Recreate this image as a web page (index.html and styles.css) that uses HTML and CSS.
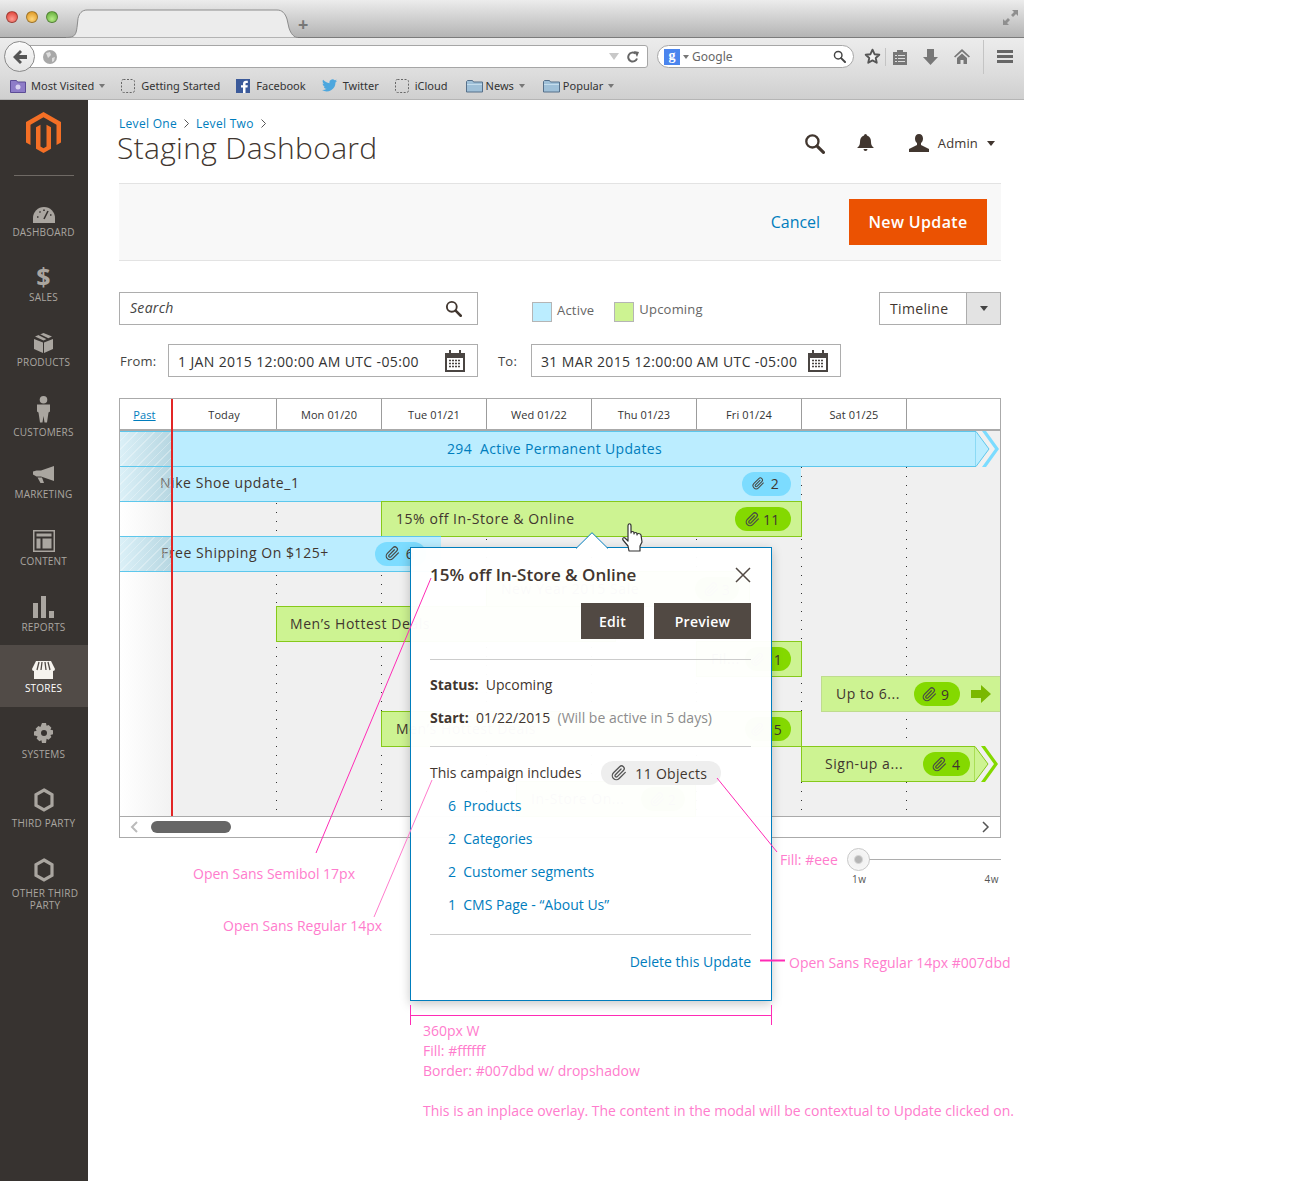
FILE: index.html
```html
<!DOCTYPE html>
<html lang="en">

<head>
    <meta charset="UTF-8">
    <title>Staging Dashboard</title>
    <link rel="stylesheet" href="styles.css">
</head>

<body>
<svg class="sprite" width="0" height="0">
  <symbol id="clip" viewBox="0 0 24 24"><path fill="none" stroke="currentColor" stroke-width="2" stroke-linecap="round" stroke-linejoin="round" d="M21.44 11.05l-9.19 9.19a6 6 0 0 1-8.49-8.49l9.19-9.19a4 4 0 0 1 5.66 5.66l-9.2 9.19a2 2 0 0 1-2.83-2.83l8.49-8.48"/></symbol>
  <symbol id="glass" viewBox="0 0 20 20"><circle cx="8" cy="8" r="5.8" fill="none" stroke="currentColor" stroke-width="2.2"/><path d="M12.5 12.5L18.5 18.5" stroke="currentColor" stroke-width="3" stroke-linecap="round"/></symbol>
  <symbol id="cal" viewBox="0 0 22 22"><path fill="#4a4542" d="M1 3h20v19H1z"/><path fill="#fff" d="M3 8h16v12H3z"/><path fill="#4a4542" d="M5 0h2v5H5zM15 0h2v5h-2z"/><path stroke="#4a4542" stroke-width="1.4" stroke-dasharray="2 1" d="M5 10.500h12M5 13.500h12M5 16.500h12"/></symbol>
  <symbol id="hex" viewBox="0 0 20 24"><path fill="none" stroke="currentColor" stroke-width="3.2" d="M10 2l8 4.700v10.600L10 22l-8-4.700V6.700z"/></symbol>
  <symbol id="dashed" viewBox="0 0 14 14"><rect x=".5" y=".5" width="13" height="13" rx="2" fill="none" stroke="#666" stroke-dasharray="2 1.500"/></symbol>
  <symbol id="folder" viewBox="0 0 17 14"><path fill="#9fc0d8" stroke="#56708a" d="M.5 2.500V13h16V3h-9l-1-1.500H1.500z"/><path fill="#c4dcec" d="M1 5h15v1H1z"/></symbol>
  <symbol id="crumb" viewBox="0 0 5 9"><path fill="none" stroke="#555" d="M.5.5l4 4-4 4"/></symbol>
</svg>

<div class="page">

  <div class="browser">
    <div class="tabbar">
      <div class="lights"><i class="light red"></i><i class="light amber"></i><i class="light lime"></i></div>
      <svg class="tab-shape" width="242" height="29" viewBox="0 0 242 29"><path fill="#ececec" stroke="#8c8c8c" d="M0 28.500c9 0 10-3 11-10l1-9c1-5 4-8.500 9-8.500h190c5 0 8 3 10 9l2 9c2 6 5 9.500 9 9.500"/></svg>
      <span class="tab-plus">+</span>
      <svg class="expand" width="15" height="15" viewBox="0 0 15 15"><path fill="#8f8f8f" d="M9 0h6v6l-2-2-3 3-2-2 3-3zM6 15H0V9l2 2 3-3 2 2-3 3z"/></svg>
    </div>
    <div class="navbar">
      <div class="back">
        <svg width="16" height="16" viewBox="0 0 16 16"><path fill="#555" d="M8 1l2 2-3 3h8v4H7l3 3-2 2-7-7z"/></svg>
      </div>
      <div class="urlbar">
        <svg class="globe" width="14" height="14" viewBox="0 0 14 14"><circle cx="7" cy="7" r="7" fill="#a8a8a8"/><path fill="#ddd" d="M3 3l4-1 1 3-3 3zM9 8l3-1-1 4-2 1z"/></svg>
        <span class="url-tri"></span>
        <svg width="12" height="12" viewBox="0 0 12 12"><path fill="none" stroke="#666" stroke-width="2" d="M10 7.500A4.500 4.500 0 1 1 8.500 2.500"/><path fill="#666" d="M7 0l5 1-2 5z"/></svg>
      </div>
      <div class="searchbar">
        <span class="g-badge">g</span><span class="g-caret"></span>
        <span class="g-text">Google</span>
        <svg class="g-glass" width="13" height="13"><use href="#glass"/></svg>
      </div>
      <div class="tool-icons">
        <svg width="17" height="17" viewBox="0 0 20 20"><path fill="#f2f2f2" stroke="#555" stroke-width="2.2" stroke-linejoin="round" d="M10 2l2.400 5.300 5.600.6-4.200 3.800 1.200 5.700L10 14.500 5 17.400l1.200-5.700L2 7.900l5.600-.6z"/></svg>
        <i class="tool-sep"></i>
        <svg width="14" height="16" viewBox="0 0 14 16"><path fill="#777" d="M0 3h4V1h6v2h4v13H0z"/><path fill="#ddd" d="M2 6h2v1H2zM5 6h7v1H5zM2 9h2v1H2zM5 9h7v1H5zM2 12h2v1H2zM5 12h7v1H5z"/></svg>
        <svg width="15" height="16" viewBox="0 0 15 16"><path fill="#777" d="M4 0h7v8h4l-7.500 8L0 8h4z"/></svg>
        <svg width="16" height="15" viewBox="0 0 16 15"><path fill="#777" d="M8 0l8 7.500-1.200 1L8 2.500 1.200 8.500 0 7.500zM3 9l5-4.500L13 9v6H9.500v-4h-3v4H3z"/></svg>
        <i class="tool-sep tall"></i>
        <svg width="16" height="13" viewBox="0 0 16 13"><path fill="#666" d="M0 0h16v3H0zM0 5h16v3H0zM0 10h16v3H0z"/></svg>
      </div>
    </div>
    <div class="bookmarks">
      <span class="mark mark-most">
        <svg width="16" height="14" viewBox="0 0 16 14"><path fill="#8e7cc8" stroke="#5c4c96" d="M.5 1.500h6l1 1.500h8v10.500H.500z"/><circle cx="8" cy="8" r="2.500" fill="#d8d0f0"/></svg>
        Most Visited<i class="mark-caret"></i>
      </span>
      <span class="mark"><svg width="14" height="14"><use href="#dashed"/></svg>Getting Started</span>
      <span class="mark"><svg width="14" height="14" viewBox="0 0 14 14"><path fill="#3b5a9a" d="M0 0h14v14H0z"/><path fill="#fff" d="M9.500 14V8.500h2l.3-2.300H9.500V5c0-.7.2-1.100 1.100-1.100h1.200V1.800C11.500 1.800 10.900 1.700 10 1.700c-1.800 0-3 1.100-3 3.100v1.400H5v2.300h2V14z"/></svg>Facebook</span>
      <span class="mark"><svg width="15" height="13" viewBox="0 0 24 20"><path fill="#4da7de" d="M24 2.400c-.9.400-1.800.7-2.800.8 1-.6 1.800-1.600 2.200-2.700-1 .6-2 1-3.100 1.200A4.900 4.900 0 0 0 12 6.200C8 6 4.400 4.100 1.700.9c-1.300 2.200-.7 5.100 1.500 6.600-.8 0-1.600-.2-2.200-.6 0 2.300 1.600 4.400 3.900 4.900-.7.200-1.500.2-2.200.1.600 2 2.400 3.400 4.600 3.400A9.900 9.900 0 0 1 0 17.300 14 14 0 0 0 21.500 5c1-.7 1.800-1.600 2.500-2.600z"/></svg>Twitter</span>
      <span class="mark"><svg width="14" height="14"><use href="#dashed"/></svg>iCloud</span>
      <span class="mark mark-tight"><svg width="17" height="14"><use href="#folder"/></svg>News<i class="mark-caret"></i></span>
      <span class="mark mark-tight"><svg width="17" height="14"><use href="#folder"/></svg>Popular<i class="mark-caret"></i></span>
    </div>
  </div>

  <div class="app">
    <nav class="sidebar">
      <svg class="logo" width="35" height="41" viewBox="0 0 35 41"><path fill="#f46f25" d="M17.500 0L35 10v20.500L30.500 33V12.700L17.500 5.200 4.500 12.700V33L0 30.500V10zM17.500 41L10 36.700V15.300l4.500-2.600v21.800l3 1.700 3-1.700V12.700l4.500 2.600v21.400z"/></svg>
      <div class="side-rule"></div>

      <a class="nav-item h-dashboard">
        <svg width="22" height="16" viewBox="0 0 22 16"><path fill="currentColor" d="M11 0a11 11 0 0 1 11 11v5H0v-5A11 11 0 0 1 11 0z"/><path stroke="#373330" stroke-width="1.600" d="M11 12L15 4M4 10h1.500M6.500 4.500l1 1M11 2.500v1.500M17 8h1.500"/></svg>
        <span>Dashboard</span>
      </a>
      <a class="nav-item h-sales">
        <span class="dollar">$</span>
        <span>Sales</span>
      </a>
      <a class="nav-item h-products">
        <svg width="19" height="20" viewBox="0 0 19 20"><path fill="currentColor" d="M0 6l9 3.500V20L0 16zM19 6l-9 3.500V20l9-4zM9.500 0L18 3.500l-8.500 4L1 3.500z"/><path stroke="#373330" stroke-width="1.400" d="M5 1.500l9 4.500"/></svg>
        <span>Products</span>
      </a>
      <a class="nav-item h-customers">
        <svg width="13" height="27" viewBox="0 0 13 27"><circle cx="6.500" cy="3.800" r="3.800" fill="currentColor"/><path fill="currentColor" d="M0 8.500h13v7l-1.500 1-1.500 10H7.500L6.500 20l-1 6.500H3L1.500 16.500 0 15.500z"/></svg>
        <span>Customers</span>
      </a>
      <a class="nav-item h-marketing">
        <svg width="21" height="17" viewBox="0 0 21 17"><path fill="currentColor" d="M21 0v15L8 10.500H3.500L0 8.500v-3l3.500-1H8zM4.500 11.500H9L11 17H7.500z"/></svg>
        <span>Marketing</span>
      </a>
      <a class="nav-item h-content">
        <svg width="22" height="22" viewBox="0 0 22 22"><path fill="none" stroke="currentColor" stroke-width="1.500" d="M.75.750h20.500v20.500H.75z"/><path fill="currentColor" d="M3.500 3.500h15v3h-15zM3.500 8.500h4v10h-4zM9.500 8.500h9v10h-9z"/></svg>
        <span>Content</span>
      </a>
      <a class="nav-item h-reports">
        <svg width="21" height="22" viewBox="0 0 21 22"><path fill="currentColor" d="M0 7h5v15H0zM8 0h5v22H8zM16 15h5v7h-5z"/></svg>
        <span>Reports</span>
      </a>
      <a class="nav-item h-stores active">
        <svg width="23" height="18" viewBox="0 0 23 18"><path fill="#f6f3ee" d="M4 0h15l4 8a2 2 0 0 1-2 2v8H2v-8a2 2 0 0 1-2-2z"/><path stroke="#514b47" stroke-width="1.300" d="M7 1L5 9M10 1L9 9M13 1L14 9M16 1L18 9"/></svg>
        <span>Stores</span>
      </a>
      <a class="nav-item h-systems">
        <svg width="20" height="20" viewBox="0 0 20 20"><path fill="currentColor" d="M8 0h4l.6 2.800 2-.9 2.800 2.800-1 2 2.600.6v4l-2.600.6 1 2-2.800 2.800-2-1L12 20H8l-.6-2.700-2 1-2.800-2.800 1-2L1 12.500l-1-.1v-4l2.600-.6-1-2 2.800-2.800 2 .9z"/><circle cx="10" cy="10" r="3" fill="#373330"/></svg>
        <span>Systems</span>
      </a>
      <a class="nav-item h-third">
        <svg width="20" height="24"><use href="#hex"/></svg>
        <span>Third Party</span>
      </a>
      <a class="nav-item h-other">
        <svg width="20" height="24"><use href="#hex"/></svg>
        <span>Other Third<br>Party</span>
      </a>
    </nav>

    <main class="main">
      <header class="page-head">
        <div>
          <div class="crumbs"><a>Level One</a><svg width="5" height="9"><use href="#crumb"/></svg><a>Level Two</a><svg width="5" height="9"><use href="#crumb"/></svg></div>
          <h1>Staging Dashboard</h1>
        </div>
        <div class="head-tools">
          <svg class="head-glass" width="21" height="21"><use href="#glass"/></svg>
          <svg class="head-bell" width="17" height="18" viewBox="0 0 17 18"><path fill="#41362f" d="M8.500 0a1.500 1.500 0 0 1 1.500 1.500C13 2.500 14 5 14 8c0 3 1 4.500 3 6H0c2-1.500 3-3 3-6 0-3 1-5.500 4-6.500A1.500 1.500 0 0 1 8.500 0zM6.500 15h4a2 2 0 0 1-4 0z"/></svg>
          <svg class="head-user" width="20" height="18" viewBox="0 0 20 18"><path fill="#41362f" d="M10 0c2.500 0 4 1.800 4 4.500 0 2-.8 3.500-2 4.500v2l8 4v3H0v-3l8-4V9C6.800 8 6 6.500 6 4.500 6 1.800 7.500 0 10 0z"/></svg>
          <span class="head-admin">Admin</span>
          <i class="head-caret"></i>
        </div>
      </header>

      <div class="action-bar">
        <a class="cancel">Cancel</a>
        <button class="btn-new">New Update</button>
      </div>

      <div class="filters">
        <div class="field search-field">
          <em>Search</em>
          <svg width="17" height="17"><use href="#glass"/></svg>
        </div>
        <div class="legend">
          <i class="swatch swatch-blue"></i><span class="legend-text">Active</span>
          <i class="swatch swatch-green"></i><span class="legend-last">Upcoming</span>
        </div>
        <div class="view-select">
          <span class="view-name">Timeline</span>
          <span class="view-arrow"><i></i></span>
        </div>
      </div>

      <div class="dates">
        <label class="label-from">From:</label>
        <div class="field date-field"><span>1 JAN 2015 12:00:00 AM UTC -05:00</span><svg width="22" height="22"><use href="#cal"/></svg></div>
        <label class="label-to">To:</label>
        <div class="field date-field"><span>31 MAR 2015 12:00:00 AM UTC -05:00</span><svg width="22" height="22"><use href="#cal"/></svg></div>
      </div>

      <section class="gantt">
        <div class="gantt-head">
          <div class="col-past"><a>Past</a></div>
          <div class="col-today">Today</div>
          <div class="col-day">Mon 01/20</div>
          <div class="col-day">Tue 01/21</div>
          <div class="col-day">Wed 01/22</div>
          <div class="col-day">Thu 01/23</div>
          <div class="col-day">Fri 01/24</div>
          <div class="col-day">Sat 01/25</div>
        </div>
        <div class="gantt-body">
          <div class="past-fade"></div>
          <i class="dots d1"></i><i class="dots d2"></i><i class="dots d3"></i><i class="dots d4"></i><i class="dots d5"></i><i class="dots d6"></i><i class="dots d7"></i>

          <div class="bar blue past b-perm">
            <span class="perm-text">294&nbsp; Active Permanent Updates</span>
            <svg class="tip" width="26" height="36" viewBox="0 0 26 36"><path fill="#bbedff" stroke="#5dc7ec" d="M0 .5h1L14 18 1 35.500H0z"/><path fill="#7cdcff" d="M7 0h4l13 18-13 18H7l13-18z"/></svg>
          </div>
          <div class="bar blue past b-nike">
            <span>Nike Shoe update_1</span>
            <span class="pill pill-blue"><svg width="15" height="15"><use href="#clip"/></svg>2</span>
          </div>
          <div class="bar green b-offer">
            <span>15% off In-Store &amp; Online</span>
            <span class="pill pill-green"><svg width="15" height="15"><use href="#clip"/></svg>11</span>
          </div>
          <div class="bar blue past b-free">
            <span>Free Shipping On $125+</span>
            <span class="pill pill-blue"><svg width="15" height="15"><use href="#clip"/></svg>6</span>
          </div>
          <div class="bar green b-year">
            <span>New Year 2015 Sale</span>
            <span class="pill pill-green"><svg width="15" height="15"><use href="#clip"/></svg>3</span>
          </div>
          <div class="bar green b-mens">
            <span>Men&rsquo;s Hottest Deals</span>
          </div>
          <div class="bar green b-fill">
            <span>Fil...</span>
            <span class="pill pill-green"><svg width="15" height="15"><use href="#clip"/></svg>1</span>
          </div>
          <div class="bar green b-up">
            <span>Up to 6...</span>
            <span class="pill pill-green"><svg width="15" height="15"><use href="#clip"/></svg>9</span>
            <svg class="go" width="20" height="18" viewBox="0 0 20 18"><path fill="#7ab800" d="M0 5h10V0l10 9-10 9v-5H0z"/></svg>
          </div>
          <div class="bar green b-five">
            <span>Men&rsquo;s Hottest Deals</span>
            <span class="pill pill-green"><svg width="15" height="15"><use href="#clip"/></svg>5</span>
          </div>
          <div class="bar green b-sign">
            <span>Sign-up a...</span>
            <span class="pill pill-green"><svg width="15" height="15"><use href="#clip"/></svg>4</span>
            <svg class="tip" width="26" height="36" viewBox="0 0 26 36"><path fill="#cdf392" stroke="#86c91a" d="M0 .5h1L14 18 1 35.500H0z"/><path fill="#84d900" d="M7 0h4l13 18-13 18H7l13-18z"/></svg>
          </div>
          <div class="bar green b-instore">
            <span>In-Store On...</span>
            <span class="pill pill-green"><svg width="15" height="15"><use href="#clip"/></svg>2</span>
          </div>

          <i class="now-line"></i>
        </div>
        <div class="scroller">
          <svg width="8" height="12" viewBox="0 0 8 12"><path fill="none" stroke="#bbb" stroke-width="2" d="M7 1L2 6l5 5"/></svg>
          <div class="thumb"></div>
          <svg class="scroll-next" width="8" height="12" viewBox="0 0 8 12"><path fill="none" stroke="#555" stroke-width="1.500" d="M1 1l5 5-5 5"/></svg>
        </div>
      </section>

      <div class="slider">
        <div class="slider-track"><i class="slider-knob"></i></div>
        <div class="slider-labels"><span>1w</span><span>4w</span></div>
      </div>
    </main>
  </div>

  <!-- overlay on the update that was clicked -->
  <aside class="popover">
    <svg class="beak" width="32" height="17" viewBox="0 0 32 17"><path fill="#fff" stroke="#007dbd" d="M0 16.500L16 .7l16 15.800"/></svg>
    <div class="pop-top">
      <h2>15% off In-Store &amp; Online</h2>
      <svg class="pop-close" width="16" height="16" viewBox="0 0 16 16"><path stroke="#514943" stroke-width="1.500" d="M1 1l14 14M15 1L1 15"/></svg>
    </div>
    <div class="pop-actions">
      <button class="btn-dark btn-edit">Edit</button>
      <button class="btn-dark btn-preview">Preview</button>
    </div>
    <hr class="pop-rule">
    <p class="pop-line pop-status"><b>Status:</b>&nbsp; Upcoming</p>
    <p class="pop-line pop-start"><b>Start:</b>&nbsp; 01/22/2015 &nbsp;<span>(Will be active in 5 days)</span></p>
    <hr class="pop-rule rule-two">
    <div class="pop-includes">
      <span class="includes-text">This campaign includes</span>
      <span class="objects"><svg width="16" height="16"><use href="#clip"/></svg>11 Objects</span>
    </div>
    <ul class="pop-list">
      <li><a>6&nbsp; Products</a></li>
      <li><a>2&nbsp; Categories</a></li>
      <li><a>2&nbsp; Customer segments</a></li>
      <li><a>1&nbsp; CMS Page - &ldquo;About Us&rdquo;</a></li>
    </ul>
    <hr class="pop-rule rule-three">
    <a class="pop-delete">Delete this Update</a>
  </aside>

  <svg class="hand" width="22" height="29" viewBox="0 0 22 29"><path fill="#fff" stroke="#333" stroke-width="1.200" stroke-linejoin="round" d="M7 28l-1-5-5-6c-1-2 1-3 2-2l3 3V3c0-3 3-3 3 0v7c0-2 3-2 3 0v1c0-2 3-2 3 0v1c0-2 3-2 4 0l1 7-2 4v5z"/></svg>

  <!-- spec notes -->
  <svg class="spec-lines" width="1312" height="1181">
    <path stroke="#ff2bb5" d="M431 578L316 853"/>
    <path stroke="#ff7ccd" d="M432 780L374 917"/>
    <path stroke="#ff2bb5" d="M717 778L777 852"/>
    <path stroke="#ff2bb5" stroke-width="2" d="M760 960.500h25"/>
    <path stroke="#ff2bb5" d="M410.500 1005v20M771.500 1005v20M410 1015.500h362"/>
  </svg>
  <span class="spec spec-semibold">Open Sans Semibol 17px</span>
  <span class="spec spec-regular">Open Sans Regular 14px</span>
  <span class="spec spec-fill">Fill: #eee</span>
  <span class="spec spec-link">Open Sans Regular 14px #007dbd</span>
  <div class="spec spec-notes">
    <p>360px W</p>
    <p>Fill: #ffffff</p>
    <p>Border: #007dbd w/ dropshadow</p>
    <p class="note-gap">This is an inplace overlay. The content in the modal will be contextual to Update clicked on.</p>
  </div>
</div>
</body>

</html>
```

FILE: styles.css
```css
* {
    box-sizing: border-box;
}

html, body {
    margin: 0;
    background: #fff;
}

body {
    font-family: "Open Sans", "Noto Sans", sans-serif;
    color: #41362f;
    width: 1312px;
    height: 1181px;
    overflow: hidden;
}

p, ul, h1, h2 {
    margin: 0;
    padding: 0;
}

button {
    font-family: inherit;
    border: 0;
    cursor: pointer;
}

i {
    display: block;
}

.sprite {
    position: absolute;
}

.page {
    position: relative;
    width: 1024px;
}

/* browser chrome */
.browser {
    height: 100px;
    font-family: "Noto Sans", sans-serif;
}

.tabbar {
    position: relative;
    height: 38px;
    background: linear-gradient(#ececec, #b4b4b4);
    border-bottom: 1px solid #7b7b7b;
}

.lights {
    display: flex;
    gap: 8px;
    padding: 11px 0 0 6px;
}

.light {
    width: 12px;
    height: 12px;
    border-radius: 50%;
    border: 1px solid rgba(0, 0, 0, .3);
}

.red { background: radial-gradient(circle at 50% 70%, #ff9a90, #d9362c); }
.amber { background: radial-gradient(circle at 50% 70%, #ffd67a, #d88f18); }
.lime { background: radial-gradient(circle at 50% 70%, #b6ec86, #58a530); }

.tab-shape {
    position: absolute;
    left: 66px;
    top: 9px;
}

.tab-plus {
    position: absolute;
    left: 298px;
    top: 12px;
    font-size: 18px;
    font-weight: 700;
    line-height: 24px;
    color: #777;
}

.expand {
    position: absolute;
    left: 1003px;
    top: 10px;
}

.navbar {
    position: relative;
    display: flex;
    align-items: center;
    height: 37px;
    background: linear-gradient(#ececec, #dcdcdc);
    padding-left: 4px;
}

.back {
    position: relative;
    z-index: 1;
    display: flex;
    align-items: center;
    justify-content: center;
    width: 31px;
    height: 31px;
    border-radius: 50%;
    background: linear-gradient(#fafafa, #e4e4e4);
    border: 1px solid #8a8a8a;
}

.urlbar {
    display: flex;
    align-items: center;
    width: 619px;
    height: 23px;
    margin-left: -6px;
    padding: 0 8px 0 13px;
    background: #fff;
    border: 1px solid #a6a6a6;
    border-radius: 0 3px 3px 0;
}

.globe {
    margin-right: auto;
}

.url-tri {
    width: 0;
    height: 0;
    margin-right: 8px;
    border-left: 5px solid transparent;
    border-right: 5px solid transparent;
    border-top: 7px solid #c8c8c8;
}

.searchbar {
    display: flex;
    align-items: center;
    width: 197px;
    height: 23px;
    margin-left: 9px;
    padding: 0 7px 0 6px;
    background: #fff;
    border: 1px solid #a6a6a6;
    border-radius: 12px;
}

.g-badge {
    width: 16px;
    height: 16px;
    background: #4b85ee;
    color: #fff;
    font: 700 14px/13px "Liberation Serif", serif;
    text-align: center;
}

.g-caret, .mark-caret, .head-caret {
    width: 0;
    height: 0;
    border-left: 3.500px solid transparent;
    border-right: 3.500px solid transparent;
    border-top: 4px solid #777;
}

.g-caret {
    margin: 0 3px;
}

.g-text {
    font-size: 12px;
    color: #666;
}

.g-glass {
    margin-left: auto;
    color: #444;
}

.tool-icons {
    display: flex;
    align-items: center;
    margin-left: 10px;
    gap: 0;
}

.tool-icons svg:nth-of-type(1) { margin-right: 4px; }
.tool-icons svg:nth-of-type(2) { margin: 0 10px 0 7px; }
.tool-icons svg:nth-of-type(3) { margin: 0 9px 0 6px; }
.tool-icons svg:nth-of-type(4) { margin: 0 13px 0 7px; }
.tool-icons svg:nth-of-type(5) { margin-left: 13px; }

.tool-sep {
    width: 1px;
    height: 18px;
    background: #c4c4c4;
}

.tool-sep.tall {
    height: 34px;
}

.bookmarks {
    display: flex;
    align-items: center;
    height: 25px;
    padding: 0 0 3px 10px;
    gap: 16px;
    font-size: 11px;
    color: #333;
    background: linear-gradient(#dcdcdc, #cfcfcf);
    border-bottom: 1px solid #b5b5b5;
}

.mark {
    display: flex;
    align-items: center;
    gap: 6px;
}

.mark-most {
    gap: 5px;
}

.mark-tight {
    gap: 3px;
    margin-left: 2px;
}

.mark-tight .mark-caret {
    margin-left: 2px;
}

/* sidebar */
.app {
    display: flex;
    height: 1081px;
}

.sidebar {
    flex: none;
    width: 88px;
    background: #373330;
    color: #aaa6a0;
    display: flex;
    flex-direction: column;
    align-items: center;
    padding-top: 12px;
}

.logo {
    flex: none;
    margin-right: 1px;
}

.side-rule {
    width: 60px;
    height: 1px;
    background: #6f6a65;
    margin: 22px 1px 24px 0;
}

.nav-item {
    display: flex;
    flex-direction: column;
    align-items: center;
    justify-content: flex-end;
    gap: 3px;
    width: 100%;
    padding: 0 1px 13px 0;
    font-size: 10px;
    line-height: 12px;
    letter-spacing: .2px;
    text-transform: uppercase;
    text-align: center;
    flex: none;
}

.nav-item svg {
    flex: none;
}

.h-dashboard { height: 51px; }
.h-sales { height: 65px; }
.h-products { height: 65px; }
.h-customers { height: 70px; }
.h-marketing { height: 62px; gap: 5px; }
.h-content { height: 67px; }
.h-reports { height: 65px; padding-bottom: 12px; }
.h-stores { height: 62px; }
.h-systems { height: 66px; gap: 5px; }
.h-third { height: 69px; gap: 5px; }
.h-other { height: 81px; padding-bottom: 12px; gap: 5px; }

.h-other span {
    line-height: 12px;
    padding-left: 3px;
}

.active {
    background: #514b47;
    color: #fff;
}

.dollar {
    font: 700 25px/24px "Open Sans", sans-serif;
}

/* page head */
.main {
    flex: none;
    width: 882px;
    margin-left: 31px;
}

.page-head {
    display: flex;
    justify-content: space-between;
    height: 83px;
    padding-top: 15px;
}

.crumbs {
    display: flex;
    align-items: center;
    gap: 7px;
    height: 16px;
    font-size: 12px;
    letter-spacing: .3px;
    color: #007dbd;
}

h1 {
    margin-left: -2px;
    font-size: 30px;
    font-weight: 300;
    line-height: 34px;
    letter-spacing: .3px;
    color: #41362f;
}

.head-tools {
    display: flex;
    align-items: center;
    height: 24px;
    margin-top: 16px;
    padding-right: 6px;
}

.head-glass {
    color: #41362f;
    margin-right: 32px;
}

.head-bell {
    margin-right: 35px;
}

.head-admin {
    margin-left: 9px;
    font-size: 13px;
    letter-spacing: .15px;
}

.head-caret {
    margin-left: 9px;
    border-left-width: 4px;
    border-right-width: 4px;
    border-top: 5px solid #41362f;
}

.action-bar {
    display: flex;
    align-items: center;
    justify-content: flex-end;
    height: 78px;
    padding-right: 14px;
    background: #f8f8f8;
    border-top: 1px solid #e3e3e3;
    border-bottom: 1px solid #e3e3e3;
}

.cancel {
    margin-right: 29px;
    font-size: 16px;
    letter-spacing: -.05px;
    color: #007dbd;
}

.btn-new {
    width: 138px;
    height: 46px;
    background: #eb5202;
    color: #fff;
    font-size: 16px;
    font-weight: 600;
    letter-spacing: .35px;
}

/* filters */
.filters {
    display: flex;
    margin-top: 31px;
    height: 33px;
}

.field {
    display: flex;
    align-items: center;
    justify-content: space-between;
    background: #fff;
    border: 1px solid #adadad;
}

.search-field {
    width: 359px;
    padding: 0 15px 2px 10px;
    font-size: 14px;
    letter-spacing: .3px;
    color: #444;
}

.search-field svg {
    color: #41362f;
    margin-top: 2px;
}

.legend {
    display: flex;
    align-items: center;
    margin-left: 54px;
    padding-top: 2px;
    height: 33px;
    font-size: 13px;
    letter-spacing: .2px;
    color: #666;
}

.swatch {
    width: 20px;
    height: 20px;
    margin-top: 4px;
    margin-right: 5px;
    border: 1px solid #b5b5b5;
}

.swatch-blue { background: #bbedff; }
.swatch-green { background: #cdf392; }

.legend-text {
    margin: 0 20px 0 0;
}

.legend-last {
    margin-bottom: 2px;
}

.view-select {
    display: flex;
    width: 122px;
    margin-left: auto;
    background: #fff;
    border: 1px solid #adadad;
}

.view-name {
    flex: 1;
    padding-left: 10px;
    font-size: 14px;
    letter-spacing: .35px;
    line-height: 31px;
}

.view-arrow {
    display: flex;
    align-items: center;
    justify-content: center;
    width: 34px;
    background: #e3e3e3;
    border-left: 1px solid #adadad;
}

.view-arrow i {
    width: 0;
    height: 0;
    border-left: 4px solid transparent;
    border-right: 4px solid transparent;
    border-top: 5px solid #444;
}

.dates {
    display: flex;
    align-items: center;
    margin-top: 19px;
    height: 33px;
    font-size: 14px;
}

.dates label {
    color: #444;
    font-size: 13px;
    letter-spacing: .2px;
}

.label-from {
    width: 49px;
    padding-left: 1px;
}

.label-to {
    width: 33px;
    margin-left: 20px;
}

.date-field {
    width: 310px;
    height: 33px;
    padding: 0 11px 0 9px;
    color: #333;
    letter-spacing: .37px;
}

.date-field span {
    padding-top: 1px;
}

/* timeline */
.gantt {
    position: relative;
    width: 882px;
    height: 440px;
    margin-top: 21px;
    border: 1px solid #aaa;
}

.gantt-head {
    display: flex;
    height: 32px;
    border-bottom: 2px solid #aaa;
    font-size: 11px;
    letter-spacing: .1px;
    color: #333;
}

.gantt-head div {
    display: flex;
    align-items: center;
    justify-content: center;
    flex: none;
    border-right: 1px solid #9c9c9c;
    padding-top: 1px;
}

.gantt-head .col-past {
    width: 52px;
    padding-right: 2px;
}

.col-past a {
    color: #007dbd;
    text-decoration: underline;
}

.col-today {
    width: 105px;
}

.col-day {
    width: 105px;
}

.gantt-body {
    position: relative;
    height: 386px;
    background: #f0f0f0;
    border-bottom: 1px solid #aaa;
}

.past-fade {
    position: absolute;
    left: 0;
    top: 0;
    width: 60px;
    height: 100%;
    background: linear-gradient(to right, #fff, #f0f0f0);
}

.dots {
    position: absolute;
    top: 0;
    width: 1px;
    height: 100%;
    background: linear-gradient(#333 1px, transparent 1px) 0 0 / 1px 9px;
}

.d1 { left: 156px; }
.d2 { left: 261px; }
.d3 { left: 366px; }
.d4 { left: 471px; }
.d5 { left: 576px; }
.d6 { left: 681px; }
.d7 { left: 786px; }

.bar {
    position: absolute;
    display: flex;
    align-items: center;
    height: 36px;
    font-size: 14px;
    letter-spacing: .55px;
    color: #41362f;
    padding: 0 0 2px 14px;
}

.blue {
    background: #bbedff;
    border-top: 1px solid #5dc7ec;
    border-bottom: 1px solid #5dc7ec;
}

.green {
    background: #cdf392;
    border: 1px solid #86c91a;
}

.past::before {
    content: "";
    position: absolute;
    left: 0;
    top: 0;
    bottom: 0;
    width: 52px;
    background: repeating-linear-gradient(135deg, rgba(255, 255, 255, .3) 0 1px, transparent 1px 6px), linear-gradient(to right, rgba(240, 242, 242, .6), rgba(175, 180, 180, .4));
}

.pill {
    display: flex;
    align-items: center;
    gap: 3px;
    height: 24px;
    margin-left: auto;
    margin-right: 10px;
    padding: 0 9px;
    border-radius: 12px;
    color: #41362f;
    font-size: 14px;
    letter-spacing: .3px;
}

.pill svg {
    color: #4a4a45;
}

.pill-blue { background: #7cdcff; padding: 0 12px 0 10px; gap: 6px; }
.pill-green { background: #84d900; }

.b-perm { left: 0; top: 0; width: 856px; padding-left: 327px; color: #007dbd; letter-spacing: .35px; }
.b-nike { left: 0; top: 35px; width: 681px; padding: 0 0 3px 40px; }
.b-offer { left: 261px; top: 70px; width: 421px; }
.b-free { left: 0; top: 105px; width: 321px; padding: 0 0 3px 41px; }
.b-year { left: 366px; top: 140px; width: 264px; }
.b-mens { left: 156px; top: 175px; width: 340px; padding-left: 13px; }
.b-fill { left: 576px; top: 210px; width: 106px; }
.b-up { left: 701px; top: 245px; width: 179px; border-color: #bfdc8e; border-right: 0; }
.b-five { left: 261px; top: 280px; width: 421px; }
.b-sign { left: 681px; top: 315px; width: 173px; padding-left: 23px; border-right: 0; }
.b-instore { left: 396px; top: 350px; width: 180px; }

.tip {
    position: absolute;
    left: 100%;
    top: -1px;
}

.b-perm .tip { margin-left: -1px; }

/* text padding shifts the flex centre, nudge the pills back */
.bar .pill { position: relative; top: 1px; }
.b-nike .pill { width: 49px; }
.b-offer .pill { width: 56px; padding: 0 0 0 10px; gap: 3px; }
.b-free .pill { left: -1px; margin-left: 47px; margin-right: 0; }
.b-up .pill { width: 46px; margin-left: 14px; margin-right: 0; padding: 0 0 0 8px; gap: 4px; }
.b-sign .pill { width: 47px; margin-left: 20px; margin-right: 0; padding: 0 0 0 9px; gap: 5px; }
.b-fill .pill, .b-five .pill { width: 46px; padding-left: 6px; gap: 9px; }

.go {
    margin-left: 11px;
    flex: none;
    position: relative;
    top: 1px;
}

.now-line {
    position: absolute;
    left: 51px;
    top: -32px;
    bottom: 0;
    width: 2px;
    background: #e22626;
    z-index: 2;
}

.scroller {
    position: relative;
    display: flex;
    align-items: center;
    height: 20px;
    padding-left: 10px;
}

.thumb {
    width: 80px;
    height: 12px;
    margin-left: 13px;
    border-radius: 6px;
    background: #666;
}

.scroll-next {
    margin-left: auto;
    margin-right: 10px;
}

/* zoom slider */
.slider {
    width: 160px;
    margin: 10px 0 0 722px;
}

.slider-track {
    position: relative;
    height: 22px;
}

.slider-track::before {
    content: "";
    position: absolute;
    left: 17px;
    right: 0;
    top: 11px;
    height: 1px;
    background: #adadad;
}

.slider-knob {
    position: absolute;
    left: 6px;
    top: 0;
    width: 23px;
    height: 23px;
    border-radius: 50%;
    background: radial-gradient(circle, #b5b5b5 0 3px, #f2f2f2 5px, #fafafa);
    border: 1px solid #c8c8c8;
}

.slider-labels {
    display: flex;
    justify-content: space-between;
    margin-top: 2px;
    padding: 0 2px 0 11px;
    font-size: 10px;
    line-height: 14px;
    letter-spacing: .5px;
    color: #555;
}

/* popover */
.popover {
    position: absolute;
    left: 410px;
    top: 547px;
    width: 362px;
    height: 454px;
    padding: 0 20px 0 19px;
    background: rgba(255, 255, 255, .975);
    border: 1px solid #007dbd;
    box-shadow: 0 3px 10px rgba(0, 0, 0, .22);
    z-index: 5;
    font-size: 14px;
}

.beak {
    position: absolute;
    left: 165px;
    top: -16px;
}

.pop-top {
    display: flex;
    justify-content: space-between;
    align-items: center;
    height: 24px;
    margin-top: 14px;
}

h2 {
    font-size: 17px;
    font-weight: 600;
    color: #41362f;
}

.pop-close {
    margin-top: 2px;
}

.pop-actions {
    display: flex;
    justify-content: flex-end;
    gap: 10px;
    margin-top: 17px;
}

.btn-dark {
    height: 36px;
    background: #514943;
    color: #fff;
    font-size: 14px;
    font-weight: 600;
    letter-spacing: .3px;
}

.btn-edit { width: 63px; }
.btn-preview { width: 97px; }

.pop-rule {
    margin: 20px 0 0;
    border: 0;
    border-top: 1px solid #ccc;
}

.rule-two {
    margin-top: 18px;
}

.rule-three {
    margin-top: 6px;
}

.pop-line {
    line-height: 20px;
    letter-spacing: 0;
    color: #41362f;
}

.pop-line b {
    font-weight: 700;
}

.pop-status {
    margin-top: 15px;
}

.pop-start {
    margin-top: 13px;
}

.pop-start span {
    color: #8c8c8c;
}

.pop-includes {
    display: flex;
    align-items: center;
    margin-top: 14px;
    height: 24px;
}

.includes-text {
    padding-bottom: 2px;
}

.objects {
    display: flex;
    align-items: center;
    gap: 8px;
    width: 120px;
    height: 24px;
    margin-left: 20px;
    padding-left: 10px;
    background: #eee;
    border-radius: 12px;
    letter-spacing: .3px;
}

.objects svg {
    color: #555;
}

.pop-list {
    list-style: none;
    margin: 11px 0 0 18px;
    color: #007dbd;
}

.pop-list li {
    height: 33px;
    line-height: 20px;
}

.pop-delete {
    display: block;
    margin-top: 17px;
    text-align: right;
    color: #007dbd;
    line-height: 20px;
}

.hand {
    position: absolute;
    left: 622px;
    top: 523px;
    z-index: 6;
}

/* spec notes */
.spec-lines {
    position: absolute;
    left: 0;
    top: 0;
    z-index: 7;
    fill: none;
    pointer-events: none;
}

.spec {
    position: absolute;
    z-index: 7;
    color: #ff7ccd;
    font-size: 14px;
    line-height: 20px;
    white-space: nowrap;
}

.spec-semibold { left: 193px; top: 864px; }
.spec-regular { left: 223px; top: 916px; }
.spec-fill { left: 780px; top: 850px; }
.spec-link { left: 789px; top: 953px; }
.spec-notes { left: 423px; top: 1021px; }

.note-gap {
    margin-top: 20px;
}
```
